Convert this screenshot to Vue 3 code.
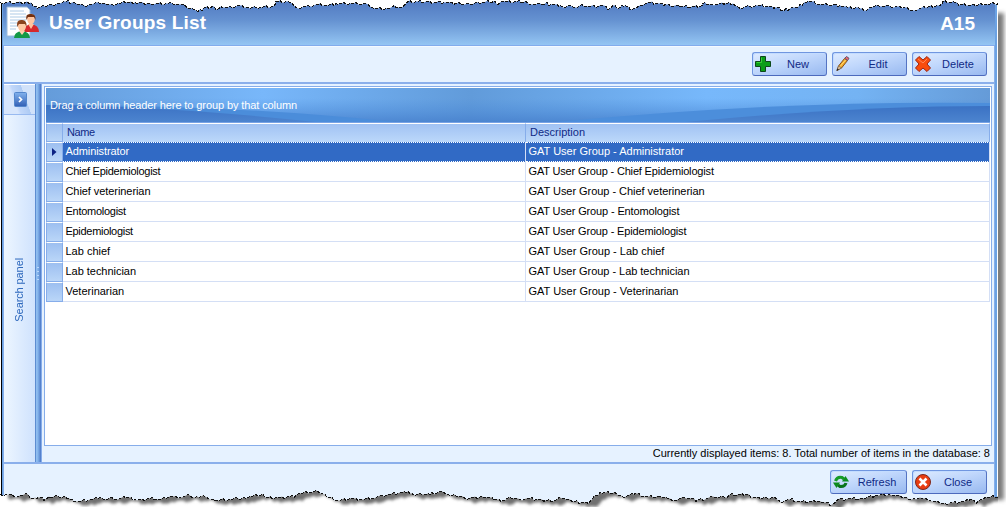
<script setup>
const groups = [
  { name: 'Administrator', track: -0.1, descTrack: 0 },
  { name: 'Chief Epidemiologist', track: -0.27, descTrack: -0.17 },
  { name: 'Chief veterinerian', track: -0.07, descTrack: -0.04 },
  { name: 'Entomologist', track: -0.27, descTrack: -0.14 },
  { name: 'Epidemiologist', track: -0.3, descTrack: -0.16 },
  { name: 'Lab chief', track: 0, descTrack: 0 },
  { name: 'Lab technician', track: -0.03, descTrack: -0.04 },
  { name: 'Veterinarian', track: 0, descTrack: 0 },
]

const topEdge = [[0,2],[25,2],[31,2],[34,6],[37,8],[44,6],[52,4],[58,3],[62,2],[66,1],[74,2],[78,4],[84,5],[92,4],[98,2],[105,3],[112,4],[120,3],[125,2],[135,2],[150,3],[172,3],[180,4],[186,6],[192,8],[198,11],[203,8],[212,6],[217,9],[222,7],[228,7],[240,5],[250,8],[256,7],[273,6],[276,1],[288,1],[294,5],[300,8],[306,6],[318,4],[328,5],[336,3],[350,3],[368,4],[374,8],[389,8],[394,5],[402,7],[406,3],[408,1],[448,2],[455,3],[470,4],[478,2],[493,1],[498,4],[503,1],[526,1],[528,3],[536,4],[545,3],[560,5],[563,7],[570,5],[575,7],[580,5],[590,6],[604,5],[608,9],[613,5],[618,8],[625,5],[630,9],[636,8],[640,5],[650,2],[665,4],[680,6],[700,6],[703,3],[712,4],[725,3],[733,3],[740,8],[750,6],[760,5],[775,7],[784,10],[792,7],[798,7],[804,2],[810,1],[820,4],[840,5],[848,7],[858,7],[864,10],[870,7],[878,5],[890,6],[905,7],[914,10],[925,7],[940,5],[943,1],[955,2],[960,4],[975,5],[985,4],[998,3]]
const bottomEdge = [[0,494],[10,494],[14,496],[20,495],[28,494],[33,498],[38,497],[45,499],[50,497],[58,496],[65,496],[72,499],[80,501],[90,499],[100,497],[105,499],[112,497],[118,499],[125,497],[135,499],[144,500],[150,498],[160,499],[170,496],[180,497],[190,495],[195,497],[203,495],[208,498],[215,500],[230,499],[236,497],[240,499],[250,496],[263,494],[266,497],[280,497],[295,496],[300,493],[318,491],[325,494],[328,497],[340,500],[350,498],[360,499],[372,498],[382,495],[390,494],[408,491],[413,494],[420,493],[430,494],[440,491],[448,494],[455,495],[465,498],[482,496],[495,499],[503,500],[510,497],[520,499],[530,498],[545,500],[555,500],[560,497],[566,499],[575,501],[588,503],[596,495],[600,492],[615,492],[622,496],[635,493],[645,496],[660,496],[668,498],[676,500],[684,497],[697,500],[713,496],[725,497],[730,494],[745,494],[760,498],[775,497],[780,501],[790,499],[800,501],[815,501],[822,502],[832,504],[838,499],[850,498],[863,498],[875,495],[890,494],[905,497],[912,499],[920,497],[930,500],[945,503],[965,501],[970,499],[977,502],[985,497],[998,496]]

// Breaks each straight run into small ragged steps.
function roughen(points) {
  const out = []
  for (let i = 0; i < points.length - 1; i++) {
    const [x0, y0] = points[i]
    const [x1, y1] = points[i + 1]
    for (let x = x0; x < x1; x += 2) {
      const jitter = x === x0 ? 0 : ((x * 37 + i * 11) % 5) / 2 - 1
      out.push([x, Math.round(y0 + ((y1 - y0) * (x - x0)) / (x1 - x0) + jitter) + 0.5])
    }
  }
  out.push(points[points.length - 1])
  return out.map((p) => p.join(',')).join(' ')
}
const topLine = roughen(topEdge)
const bottomLine = roughen(bottomEdge)
</script>

<template>
  <div class="shot">
    <div class="window">
      <header class="title">
        <svg class="logo" width="34" height="34" viewBox="0 0 34 34">
          <path d="M1 1H21L24 4V30H1Z" fill="#fff" stroke="#9cbada" />
          <path d="M4 5H18M4 8H20M4 11H20M4 14H20M4 17H14M4 20H12M4 23H10" stroke="#adcbe6" />
          <path d="M18 26Q18 19 25 18Q33 19 33 26Z" fill="#d6282c" />
          <path d="M22 18L25 23L28 18Z" fill="#ffc29c" />
          <ellipse cx="25" cy="13" rx="3.8" ry="5.3" fill="#ffc49e" />
          <path d="M20.5 14Q19 8 24 8Q30 7 29.5 14L28 11L22 11Z" fill="#74300f" />
          <path d="M8 32Q8 26 16 25Q24 26 24 32Z" fill="#149947" />
          <path d="M13 25L16 29L19 25Z" fill="#ffd1ad" />
          <ellipse cx="16" cy="20" rx="4" ry="5.5" fill="#ffc9a2" />
          <path d="M11.3 21Q10 14 15 14Q21 13 20.6 21L19 18L13 18Z" fill="#8a431c" />
        </svg>
        <h1>User Groups List</h1>
        <span class="code">A15</span>
      </header>

      <div class="toolbar">
        <button class="btn">
          <svg width="18" height="18" viewBox="0 0 18 18"><path d="M6.5 1.5H11.5V6.5H16.5V11.5H11.5V16.5H6.5V11.5H1.5V6.5H6.5Z" fill="#0b9d18" stroke="#0d481a" /><path d="M7.5 7.5V2.5M2.5 7.5H7.5" stroke="#36cf35" /></svg>
          <span>New</span>
        </button>
        <button class="btn">
          <svg width="18" height="18" viewBox="0 0 18 18"><path d="M3 15.5L4.5 11L10.5 3.5L13.5 5.5L7.5 13Z" fill="#f3a928" stroke="#80501d" /><path d="M6 11.5L12 4.5" stroke="#ffdb75" /><path d="M10.8 3.3L12.5 1.5L15 3.3L13.5 5.5Z" fill="#ec6672" stroke="#675061" /><path d="M3 15.5L4.5 11L7.5 13Z" fill="#e4c59c" stroke="#66594c" stroke-width=".6" /><path d="M2.5 16L3.3 13.5L5 14.5Z" fill="#222" /></svg>
          <span>Edit</span>
        </button>
        <button class="btn">
          <svg width="18" height="18" viewBox="0 0 18 18"><path d="M5 1.5L9 5L13 1.5L16.5 5L13 9L16.5 13L13 16.5L9 13L5 16.5L1.5 13L5 9L1.5 5Z" fill="#f94c0c" stroke="#9c2514" stroke-linejoin="round" /><path d="M4 4L9 8L13 4" stroke="#ff8657" fill="none" /></svg>
          <span>Delete</span>
        </button>
      </div>

      <div class="body">
        <aside class="side">
          <div class="expand">
            <svg width="13" height="15" viewBox="0 0 13 15"><rect x=".5" y=".5" width="12" height="14" rx="1" fill="url(#expandFill)" stroke="#5386cc" /><path d="M5 5L7.5 7.5L5 10" fill="none" stroke="#fff" stroke-width="1.7" /><defs><linearGradient id="expandFill" x2="0" y2="1"><stop stop-color="#82b2ed" /><stop offset="1" stop-color="#315fb5" /></linearGradient></defs></svg>
          </div>
          <div class="side-label"><span>Search panel</span></div>
        </aside>
        <div class="splitter"><i v-for="n in 4" :key="n"></i></div>
        <main class="content">
          <div class="grid">
            <div class="group-band">
              <svg class="waves" width="944" height="34" viewBox="0 0 945 34" preserveAspectRatio="none">
                <defs>
                  <linearGradient id="band"><stop stop-color="#659cda" /><stop offset=".23" stop-color="#78b7fa" /><stop offset=".45" stop-color="#619bda" /><stop offset=".7" stop-color="#77b8fb" /><stop offset=".86" stop-color="#74b3f3" /><stop offset="1" stop-color="#659bd8" /></linearGradient>
                  <linearGradient id="shade" x2="0" y2="1"><stop offset=".3" stop-color="#4b8cda" stop-opacity="0" /><stop offset="1" stop-color="#467fcc" stop-opacity=".8" /></linearGradient>
                  <linearGradient id="deep" x2="0" y2="1"><stop stop-color="#3b72c4" /><stop offset="1" stop-color="#4c84cf" /></linearGradient>
                </defs>
                <rect width="945" height="34" fill="url(#band)" />
                <rect width="945" height="34" fill="url(#shade)" />
                <path d="M0 17Q190 17 350 34H0Z" fill="#4b8dda" />
                <path d="M0 17Q120 18 270 34H0Z" fill="url(#deep)" />
                <path d="M510 34Q740 12 945 15V34Z" fill="#4c8edb" />
                <path d="M640 34Q810 18 945 18V34Z" fill="url(#deep)" />
              </svg>
              <span>Drag a column header here to group by that column</span>
            </div>
            <div class="row head"><b></b><span class="name">Name</span><span>Description</span></div>
            <div v-for="(g, i) in groups" :key="g.name" class="row" :class="{ selected: i === 0 }">
              <b><svg v-if="i === 0" width="5" height="8" viewBox="0 0 5 8"><path d="M0 0L4.5 4L0 8Z" fill="#0d2383" /></svg></b>
              <span :style="{ letterSpacing: g.track + 'px' }">{{ g.name }}</span>
              <span :style="{ letterSpacing: g.descTrack + 'px' }">GAT User Group - {{ g.name }}</span>
            </div>
          </div>
          <div class="status"><span>Currently displayed items: 8. Total number of items in the database: 8</span></div>
        </main>
      </div>

      <footer class="footer">
        <button class="btn wide">
          <svg width="18" height="18" viewBox="0 0 18 18"><path d="M3.5 8Q5 3.5 10 4.5L12 6" fill="none" stroke="#159b27" stroke-width="3" /><path d="M10 8.5L17 8.5L13.5 3Z" fill="#0d8e1f" /><path d="M14 10Q13 14 8 13.5L6 12" fill="none" stroke="#08741a" stroke-width="3" /><path d="M1 9.5H8L4.5 15Z" fill="#0b8a1d" /></svg>
          <span>Refresh</span>
        </button>
        <button class="btn">
          <svg width="18" height="18" viewBox="0 0 18 18"><circle cx="9" cy="9" r="7.5" fill="#e83d12" stroke="#7d271c" /><path d="M5.5 5.5L12.5 12.5M12.5 5.5L5.5 12.5" stroke="#fff" stroke-width="2.6" /></svg>
          <span>Close</span>
        </button>
      </footer>
    </div>

    <svg class="torn" width="1006" height="507" viewBox="0 0 1006 507">
      <defs>
        <filter id="soft" x="-5%" y="-50%" width="110%" height="200%"><feGaussianBlur stdDeviation="1.6" /></filter>
        <filter id="softSide" x="-100%" y="-5%" width="300%" height="110%"><feGaussianBlur stdDeviation="2" /></filter>
        <clipPath id="below"><polygon :points="`0,507 ${bottomLine} 998,507`" /></clipPath>
        <clipPath id="beside"><rect x="998" y="0" width="8" height="507" /></clipPath>
      </defs>
      <polygon :points="`0,0 ${topLine} 998,0`" fill="#fff" />
      <polygon :points="`0,507 ${bottomLine} 998,507`" fill="#fff" />
      <g clip-path="url(#below)">
        <polygon :points="`0,470 ${bottomLine} 998,470`" transform="translate(8 4)" fill="#707070" filter="url(#soft)" />
      </g>
      <g clip-path="url(#beside)">
        <rect x="985" y="13" width="19" height="487" fill="#7c7c7c" filter="url(#softSide)" />
      </g>
      <polyline :points="topLine" class="edge" />
      <polyline :points="bottomLine" class="edge" />
    </svg>
  </div>
</template>

<style>
body { background: #fff; overflow: hidden; }
</style>

<style scoped>
* { box-sizing: border-box; }
.shot { position: relative; width: 1006px; height: 507px; overflow: hidden; background: #fff; font: 11px "Liberation Sans", Arial, sans-serif; color: #000; }
.window { width: 997px; height: 507px; margin-left: 1px; display: flex; flex-direction: column; border-left: 1px solid #000; border-right: 1px solid #fff; background: #e6f2ff; }
.window { box-shadow: inset 1px 0 #6ba2e3, inset 2px 0 #85aeea, inset -2px 0 #6ba2e3, inset -3px 0 #85aeea; }
.title { height: 46px; flex: none; display: flex; align-items: flex-start; padding: 6px 20px 0 5px; margin: 0 2px 0 1px; background: linear-gradient(#5078c0, #6592d1 45%, #94c5f3); border-bottom: 1px solid #83acec; color: #fff; }
.logo { flex: none; margin-left: -2px; }
h1 { margin: 5px 0 0 9px; font: bold 19px/24px "Liberation Sans", Arial, sans-serif; letter-spacing: .2px; white-space: nowrap; }
.code { margin: 6px 0 0 auto; font: bold 19px/24px "Liberation Sans", Arial, sans-serif; }
.toolbar { height: 38px; flex: none; margin: 0 3px 0 2px; display: flex; justify-content: flex-end; gap: 5px; padding: 5px 7px 0; border-bottom: 2px solid #8aafeb; border-top: 1px solid #f5faff; }
.btn { width: 75px; height: 24px; flex: none; display: flex; align-items: center; padding: 0 2px; margin: 0; border: 1px solid #7096e0; border-right-color: #5474c4; border-bottom-color: #4c6abd; border-radius: 3px; background: linear-gradient(165deg, #dfecff, #c0d7fc 45%, #98b9f0); box-shadow: inset 1px 1px #c3dcff; font: 11px "Liberation Sans", Arial, sans-serif; color: #102a86; }
.btn span { flex: 1; text-align: center; }
.btn svg { flex: none; margin-left: -1px; }
.btn.wide { width: 77px; }
.body { flex: none; height: 380px; margin: 0 3px 0 2px; display: flex; border-bottom: 2px solid #8aafeb; }
.side { width: 31px; flex: none; display: flex; flex-direction: column; border-top: 1px solid #fff; background: linear-gradient(90deg, #edf6ff, #cfe2fd); }
.expand { height: 30px; flex: none; display: flex; align-items: center; justify-content: center; padding-left: 2px; border-bottom: 1px solid #98baf0; background: linear-gradient(70deg, #d7e6fc 35%, #c1d7fa 42%, #aecbf4 65%, #d1e2fa 66%); }
.side-label { flex: 1; display: flex; justify-content: center; align-items: center; padding-right: 2px; color: #2e69bd; }
.side-label span { writing-mode: vertical-rl; transform: rotate(180deg); letter-spacing: -.1px; margin-top: 2px; }
.splitter { width: 7px; flex: none; display: flex; flex-direction: column; align-items: flex-end; justify-content: center; gap: 3px; padding-right: 2px; border-right: 1px solid #86adea; background: linear-gradient(90deg, #5c8cd0 0 1px, #8fbdf0 1px 2px, #80b0e8 3px, #4c78c7 6px); }
.splitter i { width: 2px; height: 1px; background: #b9d6fc; }
.content { flex: 1; min-width: 0; padding: 2px 2px 0 2px; display: flex; flex-direction: column; }
.grid { height: 360px; flex: none; padding: 1px; background: #fff; border: 1px solid #86adea; }
.group-band { position: relative; height: 35px; border-bottom: 1px solid #78a3e5; color: #fff; overflow: hidden; }
.waves { position: absolute; left: 0; top: 0; }
.group-band span { position: relative; display: block; padding: 11px 0 0 4px; letter-spacing: -.1px; }
.row { height: 20px; display: grid; grid-template-columns: 17px 463px 1fr; line-height: 18px; }
.row span { padding-left: 2.5px; border-right: 1px solid #d4dff5; border-bottom: 1px solid #d4dff5; white-space: nowrap; }
.row b { display: flex; align-items: center; justify-content: center; background: linear-gradient(#9dbff0, #bad6f8); border: 1px solid #86adea; border-top: 1px solid #fff; }
.head { color: #102a86; height: 19px; }
.head span { padding-left: 4px; border: 0; border-right: 1px solid #86adea; border-top: 1px solid #fff; background: linear-gradient(#a1c2f3, #bcd8fa); line-height: 17px; }
.head .name { letter-spacing: -.4px; }
.selected span { background: #316ac5; color: #fff; border-bottom: 1px dotted #fff; border-top: 1px dotted #fff; line-height: 17px; }
.status { text-align: right; padding: 0 2px; line-height: 14px; white-space: nowrap; }
.footer { height: 43px; flex: none; display: flex; justify-content: flex-end; gap: 5px; padding: 6px 10px 0; }
.torn { position: absolute; left: 0; top: 0; pointer-events: none; }
.edge { fill: none; stroke: #111; stroke-width: 1; stroke-dasharray: 3 1.5; shape-rendering: crispEdges; }
</style>
